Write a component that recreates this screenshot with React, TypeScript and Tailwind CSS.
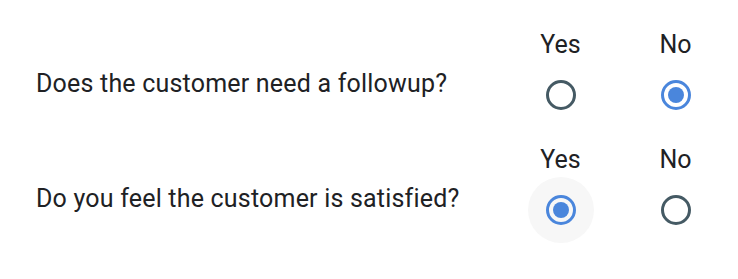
import React, { useState } from "react";

type Answer = "yes" | "no";

const Radio: React.FC<{ checked: boolean; focused?: boolean; onClick: () => void }> = ({ checked, focused, onClick }) => {
    return (
        <button
            type="button"
            onClick={onClick}
            className={`flex items-center justify-center w-[66px] h-[66px] rounded-full ${focused ? "bg-[#f7f7f7]" : ""}`}
        >
            <span
                className={`flex items-center justify-center w-[30px] h-[30px] rounded-full border-[3px] ${
                    checked ? "border-[#4a86dc]" : "border-[#455a64]"
                }`}
            >
                {checked && <span className="block w-[16px] h-[16px] rounded-full bg-[#4a86dc]" />}
            </span>
        </button>
    );
};

const Question: React.FC<{ text: string; value: Answer; focused?: boolean; onChange: (v: Answer) => void }> = ({
    text,
    value,
    focused,
    onChange,
}) => {
    return (
        <div className="grid grid-cols-[1fr_115px_115px] grid-rows-[28px_72px]">
            <div />
            <div className="text-center">Yes</div>
            <div className="text-center">No</div>
            <div className="self-start pt-[11px] tracking-[0.2px]">{text}</div>
            <div className="flex items-center justify-center">
                <Radio checked={value === "yes"} focused={focused && value === "yes"} onClick={() => onChange("yes")} />
            </div>
            <div className="flex items-center justify-center">
                <Radio checked={value === "no"} focused={focused && value === "no"} onClick={() => onChange("no")} />
            </div>
        </div>
    );
};

const App: React.FC = () => {
    const [followup, setFollowup] = useState<Answer>("no");
    const [satisfied, setSatisfied] = useState<Answer>("yes");

    return (
        <div className="w-[738px] h-[279px] bg-white pt-[31px] pl-[36px] pr-[5px] font-['Roboto',sans-serif] text-[25px] leading-[28px] text-[#202124]">
            <div className="flex flex-col gap-[15px]">
                <Question text="Does the customer need a followup?" value={followup} onChange={setFollowup} />
                <Question text="Do you feel the customer is satisfied?" value={satisfied} focused onChange={setSatisfied} />
            </div>
        </div>
    );
};

export default App;
